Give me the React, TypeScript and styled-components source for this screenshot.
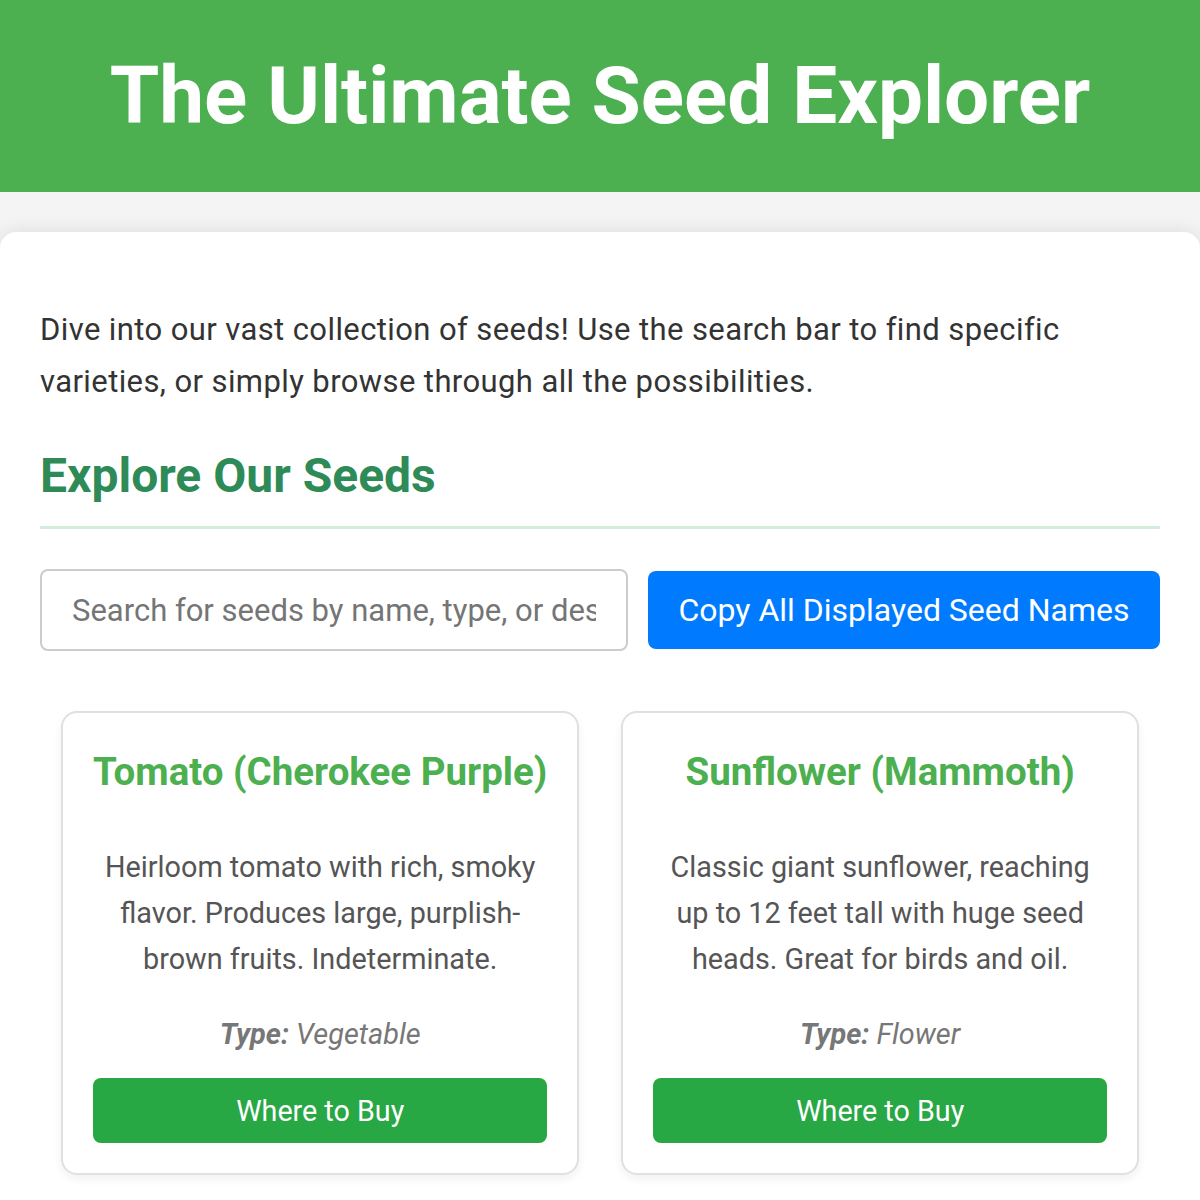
import React from 'react';
import styled, { createGlobalStyle } from 'styled-components';

const GlobalStyle = createGlobalStyle`
  html, body {
    margin: 0;
    padding: 0;
    background: #f4f4f4;
    font-family: Roboto, "Liberation Sans", Arial, sans-serif;
    color: #333;
  }
  * {
    box-sizing: border-box;
  }
`;

const Header = styled.header`
  height: 192px;
  background: #4caf50;
  color: #fff;
  display: flex;
  align-items: center;
  justify-content: center;
`;

const Title = styled.h1`
  margin: 0;
  font-size: 80px;
  font-weight: 700;
  line-height: 1;
`;

const Container = styled.main`
  margin-top: 40px;
  background: #fff;
  border-radius: 16px 16px 0 0;
  box-shadow: 0 0 20px rgba(0, 0, 0, 0.1);
  padding: 40px;
`;

const Intro = styled.p`
  margin: 32px 0 0;
  font-size: 31px;
  letter-spacing: 0.4px;
  line-height: 52px;
  color: #333;
`;

const SectionTitle = styled.h2`
  margin: 40px 0 0;
  padding-bottom: 22px;
  border-bottom: 3px solid #d4edda;
  font-size: 48px;
  font-weight: 700;
  line-height: 56px;
  color: #2e8b57;
`;

const Controls = styled.div`
  margin-top: 40px;
  display: flex;
  align-items: center;
  gap: 20px;
`;

const Search = styled.input`
  flex: 0 0 588px;
  height: 82px;
  padding: 0 30px;
  border: 2px solid #ccc;
  border-radius: 8px;
  font-family: inherit;
  font-size: 31px;
  color: #333;
  outline: none;

  &::placeholder {
    color: #757575;
  }
`;

const CopyButton = styled.button`
  flex: 1;
  height: 78px;
  border: none;
  border-radius: 8px;
  background: #007bff;
  color: #fff;
  font-family: inherit;
  font-size: 32px;
`;

const Grid = styled.section`
  margin-top: 60px;
  padding: 0 21px;
  display: grid;
  grid-template-columns: 1fr 1fr;
  gap: 42px;
`;

const Card = styled.article`
  border: 2px solid #e0e0e0;
  border-radius: 16px;
  box-shadow: 0 4px 10px rgba(0, 0, 0, 0.06);
  padding: 30px;
  text-align: center;
  display: flex;
  flex-direction: column;
`;

const CardTitle = styled.h3`
  margin: 0;
  font-size: 38.5px;
  line-height: 58px;
  font-weight: 700;
  white-space: nowrap;
  color: #4caf50;
`;

const CardText = styled.p`
  margin: 43px 0 0;
  font-size: 28.8px;
  line-height: 46px;
  color: #555;
`;

const CardType = styled.p`
  margin: 29px 0 0;
  font-size: 28.9px;
  line-height: 46px;
  font-style: italic;
  color: #777;

  strong {
    font-weight: 700;
  }
`;

const BuyButton = styled.button`
  margin-top: 21px;
  height: 65px;
  border: none;
  border-radius: 8px;
  background: #28a745;
  color: #fff;
  font-family: inherit;
  font-size: 28.7px;
`;

const seeds = [
  {
    name: 'Tomato (Cherokee Purple)',
    text: 'Heirloom tomato with rich, smoky flavor. Produces large, purplish-brown fruits. Indeterminate.',
    type: 'Vegetable',
  },
  {
    name: 'Sunflower (Mammoth)',
    text: 'Classic giant sunflower, reaching up to 12 feet tall with huge seed heads. Great for birds and oil.',
    type: 'Flower',
  },
];

export default function App() {
  return (
    <>
      <GlobalStyle />
      <Header>
        <Title>The Ultimate Seed Explorer</Title>
      </Header>
      <Container>
        <Intro>
          Dive into our vast collection of seeds! Use the search bar to find specific varieties, or simply
          browse through all the possibilities.
        </Intro>
        <SectionTitle>Explore Our Seeds</SectionTitle>
        <Controls>
          <Search placeholder="Search for seeds by name, type, or description..." />
          <CopyButton>Copy All Displayed Seed Names</CopyButton>
        </Controls>
        <Grid>
          {seeds.map((s) => (
            <Card key={s.name}>
              <CardTitle>{s.name}</CardTitle>
              <CardText>{s.text}</CardText>
              <CardType>
                <strong>Type:</strong> {s.type}
              </CardType>
              <BuyButton>Where to Buy</BuyButton>
            </Card>
          ))}
        </Grid>
      </Container>
    </>
  );
}
